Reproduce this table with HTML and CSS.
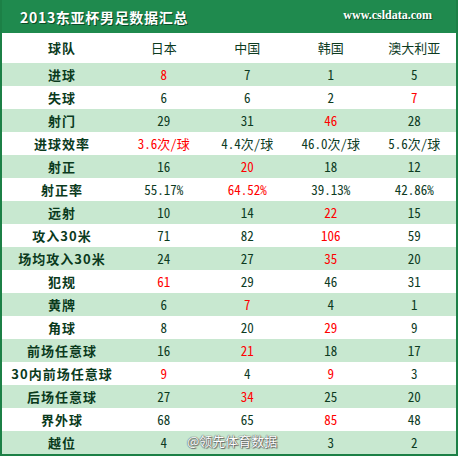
FILE: index.html
```html
<!DOCTYPE html>
<html>
<head>
  <meta charset="utf-8">
  <!-- Style for the stats table -->
  <link rel="stylesheet" href="styles.css">
</head>

<body>

  <div class="panel">

    <!-- Green title bar with site address -->
    <div class="title-bar">
      <span class="title">2013东亚杯男足数据汇总</span>
      <span class="site">www.csldata.com</span>
    </div>

    <!-- Team stats: one row per stat, one column per team -->
    <table class="stats">
      <colgroup>
        <col class="label-col">
        <col><col><col><col>
      </colgroup>
      <tr class="head-row">
        <th>球队</th><td>日本</td><td>中国</td><td>韩国</td><td>澳大利亚</td>
      </tr>
      <tr class="alt"><th>进球</th><td class="red">8</td><td>7</td><td>1</td><td>5</td></tr>
      <tr><th>失球</th><td>6</td><td>6</td><td>2</td><td class="red">7</td></tr>
      <tr class="alt"><th>射门</th><td>29</td><td>31</td><td class="red">46</td><td>28</td></tr>
      <tr><th>进球效率</th><td class="red">3.6次/球</td><td>4.4次/球</td><td>46.0次/球</td><td>5.6次/球</td></tr>
      <tr class="alt"><th>射正</th><td>16</td><td class="red">20</td><td>18</td><td>12</td></tr>
      <tr><th>射正率</th><td>55.17%</td><td class="red">64.52%</td><td>39.13%</td><td>42.86%</td></tr>
      <tr class="alt"><th>远射</th><td>10</td><td>14</td><td class="red">22</td><td>15</td></tr>
      <tr><th>攻入30米</th><td>71</td><td>82</td><td class="red">106</td><td>59</td></tr>
      <tr class="alt"><th>场均攻入30米</th><td>24</td><td>27</td><td class="red">35</td><td>20</td></tr>
      <tr><th>犯规</th><td class="red">61</td><td>29</td><td>46</td><td>31</td></tr>
      <tr class="alt"><th>黄牌</th><td>6</td><td class="red">7</td><td>4</td><td>1</td></tr>
      <tr><th>角球</th><td>8</td><td>20</td><td class="red">29</td><td>9</td></tr>
      <tr class="alt"><th>前场任意球</th><td>16</td><td class="red">21</td><td>18</td><td>17</td></tr>
      <tr><th>30内前场任意球</th><td class="red">9</td><td>4</td><td class="red">9</td><td>3</td></tr>
      <tr class="alt"><th>后场任意球</th><td>27</td><td class="red">34</td><td>25</td><td>20</td></tr>
      <tr><th>界外球</th><td>68</td><td>65</td><td class="red">85</td><td>48</td></tr>
      <tr class="alt"><th>越位</th><td>4</td><td></td><td>3</td><td>2</td></tr>
    </table>

    <!-- Weibo watermark over the last row -->
    <div class="watermark">@领先体育数据</div>
  </div>

</body>
</html>
```

FILE: styles.css
```css
body {
  margin: 0;
  background: #fff;
}

/* Outer frame: thin green border on the sides and bottom */
.panel {
  position: relative;
  width: 458px;
  height: 456px;
  box-sizing: border-box;
  border: 2px solid #1c8046;
  border-top: none;
  overflow: hidden;
}

/* Title bar */
.title-bar {
  height: 33px;
  margin: 0 -2px;
  padding: 0 26px 0 20px;
  background: #1f8a4e;
  display: flex;
  align-items: center;
  justify-content: space-between;
}

.title {
  color: #fff;
  font-family: "Noto Sans CJK SC", sans-serif;
  font-weight: bold;
  font-size: 14px;
  letter-spacing: 0.7px;
  text-shadow: 1px 1px 0 #0b4a25;
}

.site {
  color: #fff;
  font-family: "Liberation Serif", serif;
  font-weight: bold;
  font-size: 12px;
  text-shadow: 1px 1px 0 #0b4a25;
  margin-top: -2px;
}

/* Stats table */
.stats {
  width: 454px;
  border-collapse: collapse;
  table-layout: fixed;
  font-family: "Noto Sans Mono CJK SC", "Noto Sans CJK SC", "Liberation Mono", monospace;
  font-size: 13px;
  color: #0d3b1f;
}

.label-col {
  width: 120px;
}

.stats th,
.stats td {
  height: 23px;
  padding: 0;
  text-align: center;
  line-height: 23px;
  white-space: nowrap;
}

.stats th {
  font-family: "Noto Sans CJK SC", sans-serif;
  font-weight: bold;
  color: #0a3a1c;
  letter-spacing: 1px;
}

.head-row th,
.head-row td {
  height: 30px;
  line-height: 30px;
}

.head-row td {
  font-family: "Noto Sans CJK SC", sans-serif;
}

/* Every other row is light green */
.alt {
  background: #c8e8d0;
}

.red {
  color: #ff0000;
}

.watermark {
  position: absolute;
  left: 185px;
  top: 431px;
  font-family: "Noto Sans CJK SC", sans-serif;
  font-size: 13px;
  color: #fff;
  text-shadow: 0 0 1px #555, 0 0 1px #555, 1px 1px 1px #666;
}
```
